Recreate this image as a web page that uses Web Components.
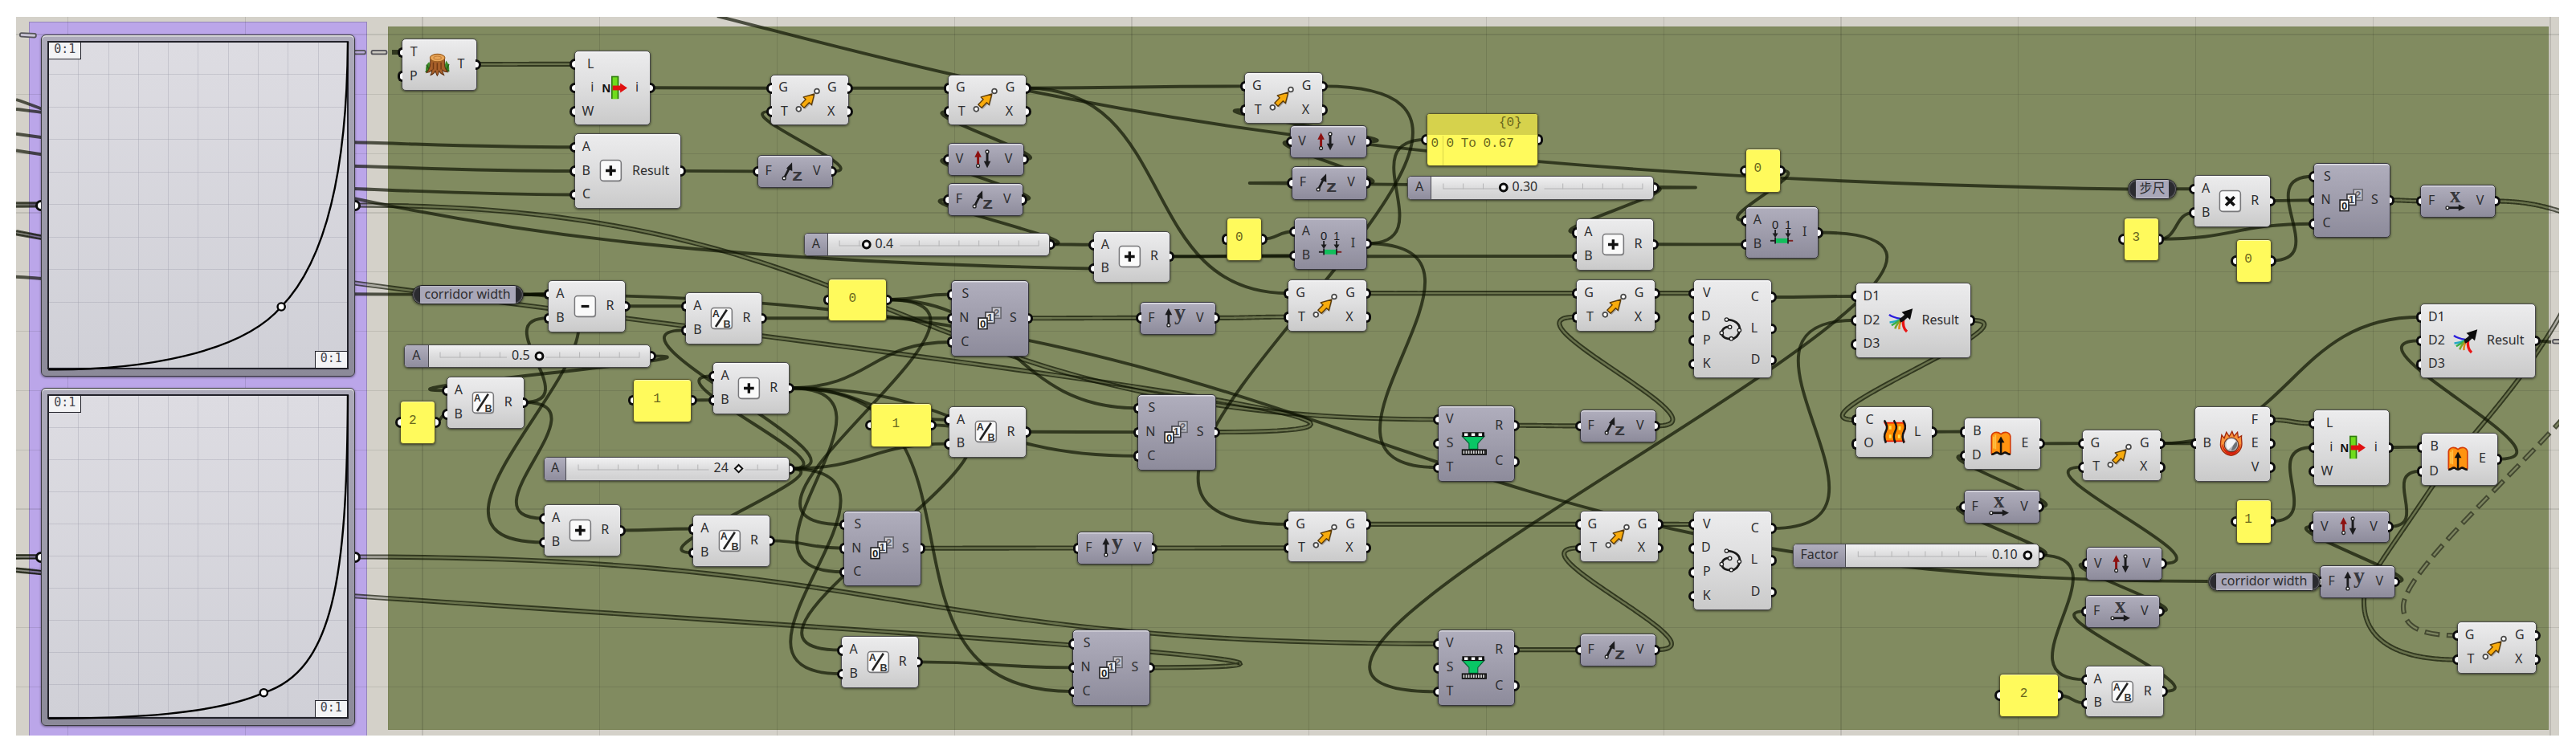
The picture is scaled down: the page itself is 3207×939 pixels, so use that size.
<!DOCTYPE html>
<html lang="en">
<head>
<meta charset="utf-8">
<title>Definition canvas</title>
<style>
html,body{margin:0;padding:0;background:#fff}
body{width:3207px;height:939px;overflow:hidden;font-family:"Noto Sans","Noto Sans CJK SC",sans-serif;font-size:16px;color:#2e2e30}
</style>
</head>
<body>
<flow-app></flow-app>
<script>
const ui = '"Noto Sans","Noto Sans CJK SC",sans-serif';

/* ---------- icons, 24 x 24 ---------- */
const btn = '<rect x="3.6" y="3.8" width="17.6" height="17.6" rx="2.6" fill="#000" opacity=".25"/><rect x="3" y="3" width="17.6" height="17.6" rx="2.4" fill="#fafafa" stroke="#77777a" stroke-width="1"/>';
const dot = (x, y, r = 1.3, w = .9, c = '#222') => `<circle cx="${x}" cy="${y}" r="${r}" fill="#fff" stroke="${c}" stroke-width="${w}"/>`;
const card = (x, y, n, f, c) => `<rect x="${x}" y="${y}" width="7.4" height="9.2" fill="${f}" stroke="${c}" stroke-width="1.1"/><text x="${x + 3.7}" y="${y + 7.9}" font-size="9" font-weight="700" text-anchor="middle" font-family="Liberation Sans" fill="${c}">${n}</text>`;
const ICONS = {
  plus: btn + '<path d="M11.8 7.6v8.6M7.5 11.9h8.6" stroke="#111" stroke-width="2.3"/>',
  minus: btn + '<path d="M8.6 11.9h6.6" stroke="#111" stroke-width="2.2"/>',
  times: btn + '<path d="M8.2 8.3l7.2 7.2M15.4 8.3l-7.2 7.2" stroke="#111" stroke-width="2.5"/>',
  div: btn + '<text x="3.9" y="10.7" font-size="8.6" font-weight="700" font-family="Liberation Sans" fill="#333">A</text><text x="13.3" y="19.6" font-size="8.6" font-weight="700" font-family="Liberation Sans" fill="#333">B</text><path d="M6.8 19L16.2 4.6" stroke="#222" stroke-width="1.8"/>',
  move: '<path d="M6 16.2l4-4.6-1.9-1.8 9.4-2.6-2.3 9.3-1.8-1.9-4.2 4.3z" fill="#000" opacity=".25" transform="translate(.6 .8)"/><path d="M6 15.8l4.3-4.4-2-1.9 9.3-2.7-2.4 9.2-2-1.9-4.3 4.4z" fill="#f8ab0c" stroke="#5b3a08" stroke-width=".9" stroke-linejoin="round"/>' + dot(4.3, 19.6, 2, 1.2, '#4a4a4a') + dot(19.7, 4.4, 2, 1.2, '#4a4a4a'),
  vv: '<path d="M7.2 18V8" stroke="#8d1010" stroke-width="2"/><path d="M7.2 4.2L4.3 10h5.8z" fill="#8d1010"/><path d="M15 6v10" stroke="#1b1b1d" stroke-width="2"/><path d="M15 19.2l-2.9-5.8h5.8z" fill="#1b1b1d"/>' + dot(7.2, 17.4) + dot(15, 5.4),
  z: '<path d="M5 17.4L9.6 8.4" stroke="#1b1b1d" stroke-width="1.9"/><path d="M11.6 4.3L6.8 9.4l5 2.2z" fill="#1b1b1d"/>' + dot(4.9, 17.6) + '<text x="11.6" y="20" font-size="14.2" font-weight="700" font-family="Liberation Sans" fill="#37373c" textLength="9" lengthAdjust="spacingAndGlyphs">z</text>',
  y: '<path d="M6 17V7" stroke="#1b1b1d" stroke-width="1.9"/><path d="M6 3.2L3 9h6z" fill="#1b1b1d"/>' + dot(6, 17.6) + '<text x="10.8" y="13.2" font-size="19" font-weight="700" font-family="Liberation Serif" fill="#37373c">y</text>',
  x: '<text x="12" y="12.6" font-size="18" font-weight="700" text-anchor="middle" font-family="Liberation Serif" fill="#37373c">x</text><path d="M6 17.5h10" stroke="#1b1b1d" stroke-width="1.9"/><path d="M20.4 17.5L14.8 14.7v5.6z" fill="#1b1b1d"/>' + dot(5.4, 17.5),
  series: card(14.4, 2.6, 2, '#c9c9d0', '#66666e') + card(8.8, 6.7, 1, '#ececf0', '#3c3c42') + card(2.8, 11.6, 0, '#fff', '#1f1f22'),
  remap: '<path d="M1.6 5.6h18.8l-5.6 6.2v4.8H7.4v-4.8z" fill="#09c665" stroke="#066838" stroke-width=".8"/><rect x="1.6" y="2.2" width="18.8" height="4" fill="#111"/><path d="M3.4 4.2h3M9.4 4.2h3M15.4 4.2h3" stroke="#fff" stroke-width="2.4"/><rect x="1.2" y="16.6" width="21.2" height="5" fill="#111"/><path d="M2.4 19.1h19" stroke="#d8d8d8" stroke-width="2.6" stroke-dasharray="1.2 .9"/>',
  domain: '<path d="M2 18.9h4" stroke="#222" stroke-width="1.3"/><path d="M17 18.9h4.2" stroke="#7c2020" stroke-width="1.3"/><rect x="6.2" y="16.9" width="10.8" height="4" fill="#12be5c"/><path d="M6.2 16v5.4M17 16v5.4M6.2 9.6v4M17 9.6v4" stroke="#1b1b1d" stroke-width="1.2"/><path d="M6.2 16.4l-2.4-3.8h4.8zM17 16.4l-2.4-3.8h4.8z" fill="#1b1b1d"/><text x="6.2" y="9" font-size="10" text-anchor="middle" font-family="Liberation Sans" fill="#1b1b1d">0</text><text x="17" y="9" font-size="10" text-anchor="middle" font-family="Liberation Sans" fill="#1b1b1d">1</text>',
  poly: '<path d="M8.5 4.1C15 4 20.4 7.600 19.600 13.1 19 17.400 16 20.200 12.500 20.400 9 20.600 5 19.500 4.300 15.400 5 11.500 8 9.800 11.300 10.200" fill="none" stroke="#1a1a1a" stroke-width="1.9"/>' + dot(8.5, 4.1, 1.5) + dot(19.3, 13.1, 1.5) + dot(12.5, 20.2, 1.5) + dot(4.3, 15.4, 1.5) + dot(11.3, 10.4, 1.5),
  loft: '<path d="M4.300 4.500c2.800 4.500 2.400 5 .8 8s-1 4 0 7.500l15.700 0c-1.600-3.500-1.800-4.500-.2-7.500s2-4 -.6-8z" fill="#ff8a00" stroke="#f01c00" stroke-width="1.200"/><path d="M8 8.500h2M16 9h2M8 16h2M15.500 16h2" stroke="#ffe04a" stroke-width="3"/><path d="M4 2.300C6.500 6 7 8.500 5.300 11.500 3.700 14.500 3.600 17.500 5.400 21.500M12 2.300c2.500 3.700 3 6.200 1.300 9.200-1.600 3-1.700 6 .1 10M19.800 2.300c2.500 3.700 2.600 6.200.9 9.200-1.600 3-1.700 6 .1 10" fill="none" stroke="#161616" stroke-width="1.700"/>',
  extrude: '<path d="M3.600 20.200V5.600C4.400 2 8.400 1.200 11.600 3.800 14.800 1.200 18.800 2 19.600 5.600v14.600c-2.200 1.400-3.400-2-5.400-1-1.600 1.600-3.400 1.600-5.200 0-2-1-3.200 2.400-5.400 1z" fill="#ff9411" stroke="#d53c06" stroke-width="1.100"/><path d="M7 4.500v12M5.500 6v10" stroke="#ffc044" stroke-width="1.200"/><path d="M3.600 20.900c2.200.6 3.400-2.400 5.400-1.200 1.600 1.600 3.600 1.600 5.200 0 2-1.200 3.200 1.800 5.400 1.200M11.600 20V9" fill="none" stroke="#16120c" stroke-width="1.700"/><path d="M11.600 5.800l-3 5.200h6z" fill="#16120c"/>',
  brep: '<path d="M3 13C3 9 3.800 7 4 4.600l2.200 2.600L8 2.200l2.400 3.600L12.800 1.600l1.600 4 3-3.400.6 4.600 2.800-1.600C20.400 8 21.300 10 21 13c-.5 5-5 8.700-9 9-4.200-.4-8.800-4-9-9z" fill="#f9923a" stroke="#a1280d" stroke-width=".9"/><path d="M4.200 12c0 5 3.600 9.200 8 9.400 4.200-.4 7.800-4.600 7.800-9.400-2 3-1 6-7.800 7-6-.6-6-4-8-7z" fill="#d8200c"/><circle cx="12.200" cy="12.800" r="6" fill="#b9bcc0" stroke="#6a3024" stroke-width=".8"/><path d="M8.500 9.500c2.500-2.500 6-2 7.500.5-2 3-4 5-6.500 7-2-2-2-5-1-7.500z" fill="#f4f5f7"/><path d="M16.500 10c1.500 3 0 7-4.500 8 1-3 2-6 4.500-8z" fill="#6d7176"/>',
  tree: '<path d="M2.200 17.5C1.600 14 3 11 5 9.500l2 7zM21.800 17c.6-3.400-.8-6.500-2.600-8.500l-2 8z" fill="#3f8d2a"/><path d="M2.800 12l2.600 5M1.800 18.200l4-2.600M21.600 11.500l-2.200 5.200M22 17.500l-4-2" stroke="#26641c" stroke-width="1.200"/><path d="M6 6.500c0 5 .4 8-3.200 12.200 2.200-.4 3.600-1.200 4.600-2.200-.2 1.600-.2 2.600-1.200 4.200 2-.6 3.200-1.800 4-3.400.6 1.600.8 2.600 1.600 4 .8-1.200 1.200-2.400 1.400-4 1 1.600 2.200 2.600 4.200 3.400-1-1.600-1.200-2.600-1.200-4.200 1 1 2.400 1.600 4.400 1.600C17.200 14 18 11.500 18 6.500z" fill="#a8602a" stroke="#5f3110" stroke-width=".7"/><path d="M8.500 10v6M11.800 10.500v6M15 10v6" stroke="#733b14" stroke-width="1"/><ellipse cx="12" cy="6.200" rx="6.300" ry="3.200" fill="#e9a659" stroke="#9c5f22" stroke-width=".8"/><ellipse cx="12" cy="6.200" rx="3.200" ry="1.500" fill="none" stroke="#c17d38" stroke-width=".7"/>',
  item: '<rect x="8.900" y="1.900" width="6.200" height="19.400" fill="#6fdc1c"/><path d="M9.400 21V2.400h5.200V21" fill="none" stroke="#2f7a10" stroke-width="1.100"/><path d="M10 11.900h7.500" stroke="#e01010" stroke-width="4"/><path d="M22.400 11.900L16.400 7.800v8.200z" fill="#e01010"/><text x="1.100" y="15.800" font-size="10" font-weight="700" font-family="Liberation Sans" fill="#111">N</text>',
  merge: '<g fill="none" stroke-width="1.700"><path d="M2 7.400C5 9.800 8 10.200 12.500 11" stroke="#2a1cdc"/><path d="M2.400 14C6 13.600 8 13 12.500 11" stroke="#26a9c4"/><path d="M4 16.500C6.500 15 9 13.500 13 11" stroke="#36b04a"/><path d="M7 19.300C8 16 10 13.500 13 11" stroke="#7aa62a"/><path d="M10.500 19.800C10.300 16 11.500 13.500 13 11" stroke="#e0861c"/><path d="M17 21.800C14.800 20 13.400 16 14 11" stroke="#e81414" stroke-width="2.300"/></g><path d="M11 12.400C14 11.500 16 9 18 6.600" fill="none" stroke="#111" stroke-width="3.400"/><path d="M21.900 2.200L12.600 5.300l7.100 6.400z" fill="#0b0b0b"/>'
};
class FlowIcon extends HTMLElement {
  connectedCallback() {
    this.attachShadow({mode: 'open'}).innerHTML =
      `<style>:host{display:block;width:35.300px;height:35.300px}svg{display:block;width:100%;height:100%;overflow:visible}</style><svg viewBox="0 0 24 24">${ICONS[this.getAttribute('name')]}</svg>`;
  }
}
customElements.define('flow-icon', FlowIcon);

const boxCss = `:host{position:absolute;display:block;left:var(--x);top:var(--y);width:var(--w);height:var(--h);font:16px/20px ${ui};color:#2e2e30}
.grip{position:absolute;top:calc(50% - 6.800px);width:6.800px;height:13.600px;box-sizing:border-box;background:#fff;border:3px solid #0c0c0c}
.grip.l{left:-6.500px;border-right:0;border-radius:7px 0 0 7px}
.grip.r{right:-6.500px;border-left:0;border-radius:0 7px 7px 0}`;

/* ---------- component node ---------- */
class FlowNode extends HTMLElement {
  connectedCallback() {
    const rows = (a, side) => (this.getAttribute(a) || '').split(',').map(t => `<div class="row"><i class="grip ${side}"></i><span>${t}</span></div>`).join('');
    this.attachShadow({mode: 'open'}).innerHTML = `<style>${boxCss}
.body{display:flex;height:100%;box-sizing:border-box;padding:1.700px 0;border:1px solid #49494b;border-radius:5px;background:linear-gradient(#ececed,#dfdfe0 45%,#cacaca);box-shadow:inset 0 1.500px 0 #fff9,0 1px 3px #0009}
:host([tone=grey]) .body{background:linear-gradient(#b0aebd,#a19fae 45%,#8d8b9b);border-color:#36363c}
.col{display:flex;flex-direction:column}
.row{position:relative;flex:1;display:flex;align-items:center;padding-bottom:0}
.row span{position:relative;top:-1.500px}
.in .row{justify-content:flex-end;padding-left:9px}
.out .row{padding-right:14px}
.mid{flex:1;display:flex;align-items:center;justify-content:center;min-width:0}
.mid flow-icon{flex:none}
</style><div class="body"><div class="col in">${rows('in', 'l')}</div><div class="mid"><flow-icon name="${this.getAttribute('icon')}"></flow-icon></div><div class="col out">${rows('out', 'r')}</div></div>`;
  }
}
customElements.define('flow-node', FlowNode);

/* ---------- yellow panel ---------- */
class FlowPanel extends HTMLElement {
  connectedCallback() {
    const head = this.getAttribute('head');
    this.attachShadow({mode: 'open'}).innerHTML = `<style>${boxCss}
.body{height:100%;box-sizing:border-box;border:1px solid #57552b;border-radius:4px;background:#fffa5c;box-shadow:0 1px 3px #0009,inset 0 1px 0 #ffffb0;display:flex;align-items:center;justify-content:center;padding:0 13px 4px 0;overflow:hidden;font:16px/18px "Liberation Mono",monospace;color:#6a671c}
.list{display:block;padding:0}
.head{height:26px;line-height:22px;background:#d6d24c;text-align:right;padding-right:19px;box-sizing:border-box}
.line{display:flex;line-height:20px;margin-top:1px}
.line b{font-weight:400;width:20px;box-sizing:border-box;padding-left:5px;border-right:1px solid #d9d54a;height:40px}
.line span{padding-left:4px;white-space:pre;word-spacing:-1px}
</style><i class="grip l"></i><i class="grip r"></i>` + (head
      ? `<div class="body list"><div class="head">${head}</div><div class="line"><b>0</b><span><slot></slot></span></div></div>`
      : `<div class="body"><slot></slot></div>`);
  }
}
customElements.define('flow-panel', FlowPanel);

/* ---------- relay ---------- */
class FlowRelay extends HTMLElement {
  connectedCallback() {
    this.attachShadow({mode: 'open'}).innerHTML = `<style>${boxCss}
.body{height:100%;box-sizing:border-box;border:1.500px solid #1f1f22;border-radius:12px;background:linear-gradient(90deg,#2b2b30 0 9px,#a9a7b8 9px calc(100% - 9px),#2b2b30 calc(100% - 9px));display:flex;align-items:center;justify-content:center;box-shadow:0 1px 3px #0009,inset 0 0 2px #eee;white-space:nowrap;padding-bottom:2px}
</style><div class="body"><slot></slot></div>`;
  }
}
customElements.define('flow-relay', FlowRelay);

/* ---------- number slider ---------- */
class FlowSlider extends HTMLElement {
  connectedCallback() {
    const g = n => +this.getAttribute(n), lw = g('labelw'), k = g('knob'), tx = g('tx'), step = g('step') || 24.8, start = lw + 13.5, h = 29;
    let r = '';
    const lo = Math.min(tx, k) - 6, hi = Math.max(tx + g('tw'), k) + 8;
    for (let i = 0; i <= 10; i++) { const X = start + i * step; if (X < lo || X > hi) r += `M${X} 9.500v7`; }
    const end = start + 10 * step;
    r += `M${start} 16H${Math.min(lo, end)}` + (hi < end ? `M${hi} 16H${end}` : '');
    const knob = this.hasAttribute('diamond') ? `<path d="M${k} 10l4.600 4.600-4.600 4.600-4.600-4.600z" fill="#fff" stroke="#0c0c0c" stroke-width="2"/>` : `<circle cx="${k}" cy="14.500" r="4.400" fill="#fff" stroke="#0c0c0c" stroke-width="3"/>`;
    this.attachShadow({mode: 'open'}).innerHTML = `<style>${boxCss}
.body{position:relative;display:flex;height:100%;box-sizing:border-box;border:1px solid #49494b;border-radius:5px;overflow:hidden;background:linear-gradient(#f1f1f2,#dcdcdd 50%,#cfcfd0);}
:host{border-radius:5px;box-shadow:0 1px 3px #0009}
.name{width:${lw - 2}px;box-sizing:border-box;background:linear-gradient(#b0aebd,#8f8d9d);border-right:1.500px solid #4a4a50;display:flex;align-items:center;justify-content:center;padding-bottom:3px}
svg{position:absolute;left:-1px;top:-1px;width:100%;height:100%;overflow:visible}
text{font:16px ${ui};fill:#2e2e30}
</style><i class="grip r"></i><div class="body"><div class="name"><slot></slot></div><svg><path d="${r}" fill="none" stroke="#b4b4b6" stroke-width="1"/>${knob}<text x="${tx}" y="19">${this.getAttribute('value')}</text></svg></div>`;
  }
}
customElements.define('flow-slider', FlowSlider);

/* ---------- graph mapper ---------- */
class FlowMapper extends HTMLElement {
  connectedCallback() {
    this.attachShadow({mode: 'open'}).innerHTML = `<style>${boxCss}
.body{display:flex;height:100%;box-sizing:border-box;padding:7px 7.500px 8px;border:1px solid #3a3a40;border-radius:6px;background:linear-gradient(#adabba,#8c8a99);box-shadow:inset 0 1.500px 0 #eee,0 1px 3px #0007}
.plot{position:relative;flex:1;display:flex;flex-direction:column;justify-content:space-between;border:2px solid #22222a;box-sizing:border-box;background:
repeating-linear-gradient(90deg,transparent 0 36.300px,#9a9aa85a 36.300px 37.300px),
repeating-linear-gradient(transparent 0 calc(10% - 1px),#9a9aa85a calc(10% - 1px) 10%),linear-gradient(#dddce2,#d0d0d7);font:15px/17px "DejaVu Sans Mono",monospace;color:#46464c}
.tag{width:40px;height:21px;box-sizing:border-box;background:#f3f3f5;border:solid #22222a;border-width:0 1.500px 1.500px 0;text-align:center;font-weight:400}
.tag.b{align-self:flex-end;border-width:1.500px 0 0 1.500px}
svg{position:absolute;left:0;top:0;width:100%;height:100%;overflow:visible}
</style><i class="grip l"></i><i class="grip r"></i><div class="body"><div class="plot"><div class="tag">0:1</div><div class="tag b">0:1</div></div></div>
<svg><path d="${this.getAttribute('curve')}" fill="none" stroke="#000" stroke-width="2.400"/><circle cx="${this.getAttribute('hx')}" cy="${this.getAttribute('hy')}" r="4.600" fill="#fff" stroke="#000" stroke-width="2.400"/></svg>`;
  }
}
customElements.define('flow-mapper', FlowMapper);

/* ---------- document data ---------- */
const G = 'grey';
const kinds = {
  move: ['G,T', 'G,X', 'move'], ab: ['A,B', 'R', 'div'], add: ['A,B', 'R', 'plus'], series: ['S,N,C', 'S', 'series', G],
  fz: ['F', 'V', 'z', G], fy: ['F', 'V', 'y', G], fx: ['F', 'V', 'x', G], vv: ['V', 'V', 'vv', G],
  item: ['L,i,W', 'i', 'item'], remap: ['V,S,T', 'R,C', 'remap', G], domain: ['A,B', 'I', 'domain', G],
  poly: ['V,D,P,K', 'C,L,D', 'poly'], merge: ['D1,D2,D3', 'Result', 'merge'], extrude: ['B,D', 'E', 'extrude'],
  loft: ['C,O', 'L', 'loft'], sub: ['A,B', 'R', 'minus'], mult: ['A,B', 'R', 'times'], tree: ['T,P', 'T', 'tree'],
  brep: ['B', 'F,E,V', 'brep'], sum: ['A,B,C', 'Result', 'plus']
};
const nodes = {
  tree: ['tree', 500, 48, 93.5, 64.7], item1: ['item', 714.6, 62.7, 95.5, 93.8], sum: ['sum', 714.6, 166.3, 133.8, 93.7],
  mv1: ['move', 959.3, 92.7, 97.4, 63.8], fz1: ['fz', 942.5, 193.3, 94, 40.8], sub: ['sub', 682.2, 349, 97.3, 65],
  ab1: ['ab', 853.2, 364, 96.3, 65], add2: ['add', 887.3, 451, 96, 65], ab2: ['ab', 555.6, 469, 97, 64.7],
  add3: ['add', 676.8, 628.3, 96.3, 65], ab3: ['ab', 862, 641.3, 97, 64.8],
  mv2: ['move', 1180.1, 92.7, 98.3, 63.8], vv1: ['vv', 1179.8, 178.3, 95.6, 40.8], fz2: ['fz', 1179.8, 228.3, 93.9, 41],
  add4: ['add', 1360.6, 287.7, 96.3, 64], ser1: ['series', 1184.2, 349.3, 96.7, 94.5], fy1: ['fy', 1419.3, 375.7, 94.3, 41],
  ab4: ['ab', 1180.8, 505.7, 97.6, 64.7], ser2: ['series', 1416.2, 491, 97.4, 94.8], ser3: ['series', 1050.2, 636, 96.7, 94],
  fy2: ['fy', 1341.2, 662.3, 94.6, 41], ab5: ['ab', 1047.4, 792.3, 96.4, 64.7], ser4: ['series', 1335.4, 784.3, 97, 94.7],
  mv3: ['move', 1549, 90.3, 98.3, 64.2], vv2: ['vv', 1606.3, 155.7, 96, 41.6], fz3: ['fz', 1607.7, 207.3, 94.2, 41.4],
  dom1: ['domain', 1610.7, 271, 91.5, 65], mv4: ['move', 1603.2, 348, 98.7, 64.5], add5: ['add', 1962.2, 272.3, 97.2, 64.5],
  mv5: ['move', 1962.2, 348, 99.3, 64.5], rem1: ['remap', 1789.9, 505, 96.6, 95], fz4: ['fz', 1966.6, 510, 95, 41.4],
  mv6: ['move', 1603.2, 635.7, 98.7, 64.4], mv7: ['move', 1966.6, 635.7, 98.7, 64.4], rem2: ['remap', 1789.9, 784.3, 96.6, 95],
  fz5: ['fz', 1966.6, 788.7, 95, 41.4], dom2: ['domain', 2172.7, 257.3, 91.8, 65], pl1: ['poly', 2107.9, 348, 98.6, 123],
  mg1: ['merge', 2309.5, 351.7, 144.4, 94.7], pl2: ['poly', 2107.9, 635.7, 98.6, 124.3], loft: ['loft', 2310.2, 505.7, 96.3, 64.7],
  ex1: ['extrude', 2445, 520.3, 95.5, 64.7], fx1: ['fx', 2444.6, 610.3, 95.2, 41.7], mv8: ['move', 2592.4, 535, 98.2, 64.4],
  vv3: ['vv', 2597.1, 681.3, 95, 41.8], fx2: ['fx', 2596.1, 740.7, 93.4, 41.4], ab6: ['ab', 2596.4, 829.3, 97.4, 64],
  mul: ['mult', 2730.9, 218, 96.4, 64.7], ser5: ['series', 2879.5, 202.7, 96.4, 93.7], fx3: ['fx', 3013.1, 229.7, 94.2, 41.6],
  mg2: ['merge', 3013.1, 377.7, 144.4, 93.7], brep: ['brep', 2732.4, 505.7, 95, 94], item2: ['item', 2879.5, 510, 95.4, 94.7],
  ex2: ['extrude', 3014.2, 539.3, 95.8, 65.4], vv4: ['vv', 2879.1, 635.7, 95.7, 40.8], fy3: ['fy', 2888.4, 704, 93.8, 41.4],
  mv9: ['move', 3058.8, 773.7, 98.8, 65.6]
};
const panels = {
  p2: [498.3, 498.7, 44, 54.3, '2'], p1: [788, 471.7, 73.3, 54, '1'], p0: [1031, 346.7, 73.4, 53.7, '0'], p1b: [1083.6, 502.3, 76.2, 54.7, '1'],
  p0b: [1527.1, 270.7, 44.2, 54.6, '0'], pbig: [1775.5, 141.3, 139.3, 65.7, '0 To 0.67', '{0}'], p0c: [2172.7, 185.3, 44, 54.4, '0'],
  p2b: [2489.3, 839.3, 73.4, 54, '2'], p3: [2643.7, 271, 44.2, 54, '3'], p0d: [2783.5, 297.7, 44.1, 54.3, '0'], p1c: [2783.5, 622.3, 44.1, 54.4, '1']
};
const sliders = {
  s05: [503, 429.3, 307.2, 28.7, 'A', 31.5, 168.5, 134, '0.5', 23], s24: [676.8, 569.3, 306.7, 29.4, 'A', 29.5, 242.6, 211.5, '24', 19, 'd'],
  s04: [1001, 290.3, 306.4, 28.7, 'A', 30.6, 77.8, 88.5, '0.4', 23], s30: [1752, 219.3, 307, 29.4, 'A', 31.4, 119.8, 130.5, '0.30', 32],
  sF: [2231.7, 676.7, 307.8, 30, 'Factor', 67.8, 292.4, 248, '0.10', 32, '', 20.9]
};
const relays = {r1: [512.6, 355.3, 139, 23.5, 'corridor width'], r2: [2748.7, 712.7, 140, 23.3, 'corridor width'], r3: [2648.8, 223.3, 61.2, 24.4, '步尺']};

/* from.port > to.port, "2" marks a list wire, last value overrides the handle length */
const links = [
  ['tree', 'item1.0', 2], ['item1', 'mv1.0'], ['fz1', 'mv1.1'], ['sum', 'fz1.0'], ['mv1', 'mv2.0'], ['vv1', 'mv2.1'], ['fz2', 'vv1.0'],
  ['s04', 'fz2.0'], ['s04', 'add4.0'], ['r1', 'sub.0'], ['r1', 'sub.0'], ['sub', 'ab1.0'], ['s05', 'ab2.0'], ['p2', 'ab2.1'], ['ab2', 'sub.1'], ['ab2', 'add3.0'],
  ['r1', 'add3.1'], ['r1', 'r2.0'], ['s24', 'ab1.1'], ['s24', 'add2.0'], ['p1', 'add2.1'], ['s24', 'ab3.1'], ['s24', 'ab4.1'], ['s24', 'ab5.1'],
  ['add3', 'ab3.0'], ['ab3', 'ser3.1'], ['add2', 'ser1.2'], ['add2', 'ab4.0'], ['add2', 'ser3.2'], ['add2', 'ser4.2'], ['add2', 'ser2.2'],
  ['p0', 'ser1.0'], ['p0', 'ser2.0'], ['p0', 'ser3.0'], ['ab1', 'ser1.1'], ['p1b', 'ab5.0'], ['ab4', 'ser2.1'], ['ab5', 'ser4.1'],
  ['ser1', 'fy1.0', 2], ['fy1', 'mv4.1', 2], ['ser3', 'fy2.0', 2], ['fy2', 'mv6.1', 2], ['mv4', 'mv5.0', 2], ['mv6', 'mv7.0', 2], ['mv5', 'pl1.0', 2], ['mv7', 'pl2.0', 2],
  ['rem1', 'fz4.0', 2], ['fz4', 'mv5.1', 2], ['rem2', 'fz5.0', 2], ['fz5', 'mv7.1', 2],
  ['mv2', 'mv3.0'], ['mv2', 'mv4.0'], ['mv3', 'mv6.0'], ['vv2', 'mv3.1'], ['fz3', 'vv2.0'], ['s30', 'fz3.0', 1, 290], ['s30', 'add5.0'],
  ['p0b', 'dom1.0'], ['add4', 'dom1.1'], ['add4', 'add5.1'], ['dom1', 'pbig.0'], ['dom1', 'rem1.2'], ['add5', 'dom2.1'], ['p0c', 'dom2.0'], ['dom2', 'rem2.2'],
  ['pl1', 'mg1.0'], ['pl2', 'mg1.1'], ['mg1', 'loft.0', 2], ['loft', 'ex1.0'], ['ex1', 'mv8.0'], ['fx1', 'ex1.1'], ['sF', 'fx1.0'], ['sF', 'ab6.0'], ['p2b', 'ab6.1'],
  ['ab6', 'fx2.0'], ['fx2', 'vv3.0'], ['vv3', 'mv8.1'], ['mv8', 'brep.0'], ['mv8', 'mg2.0'], ['brep', 'item2.0', 2], ['p1c', 'item2.1'], ['item2', 'ex2.0'], ['vv4', 'ex2.1'],
  ['fy3', 'vv4.0'], ['ex2', 'mg2.1'], ['r3', 'mul.0'], ['p3', 'mul.1'], ['p3', 'ser5.2'], ['p0d', 'ser5.0'], ['mul', 'ser5.1'], ['ser5', 'fx3.0', 2],
  ['gm1', 'rem1.0', 2], ['gm2', 'rem2.0', 2], ['ser2', 'gm1.0', 2], ['ser4', 'gm2.0', 2]
];
const mappers = {gm1: [50.8, 42.7, 391.4, 426.3], gm2: [50.8, 483.3, 391.4, 421]};

function port(id, side, i) {
  let x, y, w, h, n = 1;
  if (nodes[id]) { let k; [k, x, y, w, h] = nodes[id]; n = kinds[k][side].split(',').length; }
  else [x, y, w, h] = panels[id] || sliders[id] || relays[id] || mappers[id];
  return [side ? x + w : x, y + 2.7 + (h - 5.4) * (i + .5) / n - .3];
}
function offset(c, o) {
  let d = '';
  const n = 90;
  for (let k = 0; k <= n; k++) {
    const t = k / n, u = 1 - t, p = [0, 1].map(a => u * u * u * c[0][a] + 3 * u * u * t * c[1][a] + 3 * u * t * t * c[2][a] + t * t * t * c[3][a]);
    const v = [0, 1].map(a => u * u * (c[1][a] - c[0][a]) + 2 * u * t * (c[2][a] - c[1][a]) + t * t * (c[3][a] - c[2][a]));
    const l = Math.hypot(...v) || 1;
    d += (k ? 'L' : 'M') + (p[0] - v[1] / l * o).toFixed(2) + ' ' + (p[1] + v[0] / l * o).toFixed(2);
  }
  return d;
}
const wire = (c, dbl) => dbl
  ? `<path d="${offset(c, 2.1)}" stroke-width="1.900"/><path d="${offset(c, -2.1)}" stroke-width="1.900"/><path d="${offset(c, 0)}" stroke-width="2.200" stroke-opacity=".2"/>`
  : `<path d="M${c[0]}C${c[1]} ${c[2]} ${c[3]}" stroke-width="3.900"/>`;

class FlowWires extends HTMLElement {
  connectedCallback() {
    let s = '';
    for (const [a, b, dbl, dd] of links) {
      const [bi, bp] = b.split('.'), p = port(a, 1, 0), q = port(bi, 0, +bp);
      const d = dd || Math.max(Math.abs(q[0] - p[0]) * .5, Math.abs(q[1] - p[1]) * .74);
      s += wire([p, [p[0] + d, p[1]], [q[0] - d, q[1]], q], dbl === 2);
    }
    const one = (...p) => { s += wire(p); }, two = (...p) => { s += wire(p, true); };
    one([440, 177.3], [530, 179.5], [600, 183.3], [715, 183.3]);
    one([440, 206.7], [530, 209.5], [600, 213], [715, 213]);
    one([440, 235], [530, 238.5], [600, 242], [715, 242.5]);
    one([440, 247], [620, 285], [860, 325], [1361, 334.5]);
    one([440, 366.3], [460, 366.5], [480, 366.6], [513, 366.6]);
    one([20, 124], [30, 127], [40, 131], [53, 136]);
    one([20, 136], [30, 137], [40, 138.5], [53, 140]);
    one([20, 166.7], [30, 168], [40, 169.5], [53, 171.2]);
    one([20, 187.5], [30, 189], [40, 190.5], [53, 192.5]);
    one([20, 344.7], [30, 345], [40, 346], [53, 347]);
    two([20, 289], [30, 291], [40, 293], [53, 295.5]);
    two([20, 254.3], [30, 254.3], [40, 254.3], [50, 254.3]);
    two([20, 709.5], [30, 710.5], [40, 711.5], [53, 713]);
    two([20, 693.3], [30, 693.3], [40, 693.3], [50, 693.3]);
    one([893, 20], [1200, 98], [1600, 220], [2649, 235.5]);
    two([3107, 250.5], [3135, 250.5], [3160, 254], [3190, 264]);
    two([3059, 821.5], [2990, 822], [2942, 800], [2943, 748]);
    two([2943, 748], [2943, 725], [2965, 700], [3028, 606]);
    two([3028, 606], [3060, 562], [3100, 520], [3137, 470]);
    two([3137, 470], [3155, 445], [3175, 415], [3190, 388]);
    one([3157, 424.500], [3162, 424.500], [3168, 425], [3176, 426]);
    const dash = (d, inner, off) => `<path d="${d}" stroke="#3c402b" stroke-opacity=".9" stroke-width="6.200" stroke-dasharray="19 8.500" stroke-dashoffset="${off}"/><path d="${d}" stroke="${inner}" stroke-opacity="1" stroke-width="2.400" stroke-dasharray="15.400 12.100" stroke-dashoffset="${off - 1.8}"/>`;
    const cap = (x, y, w, f, r = 2) => `<rect x="${x}" y="${y}" width="${w}" height="4.600" rx="2" fill="${f}" stroke="#55545a" stroke-opacity="1" stroke-width="1.800" transform="rotate(${r} ${x} ${y})"/>`;
    const far = dash('M3059 791.500C3015 791 2992 782 2992 755C2992 715 3120 600 3190 522', '#7c8460', 6);
    const caps = cap(25, 41, 20, '#c9c4d4', 3) + cap(441, 62.800, 14, '#b7a8d8', 0) + cap(462.500, 62.800, 19, '#c9c6be', 0) + `<path d="M488 65h14" stroke-width="6"/>` + cap(3178, 423, 14, '#c9c6be', 0);
    this.attachShadow({mode: 'open'}).innerHTML = `<style>:host{position:absolute;left:0;top:0;display:block;width:3166px;height:895px;overflow:hidden}svg{display:block}</style>
<svg width="3166" height="895" viewBox="20 21 3166 895" fill="none" stroke="#0c1000" stroke-opacity=".68">${s}${far}${caps}</svg>`;
  }
}
customElements.define('flow-wires', FlowWires);

/* ---------- group box ---------- */
class FlowGroup extends HTMLElement {
  connectedCallback() {
    this.attachShadow({mode: 'open'}).innerHTML = `<style>:host{position:absolute;display:block;box-sizing:border-box;left:var(--x);top:var(--y);width:var(--w);height:var(--h);background:var(--fill);border:1px solid var(--edge)}</style>`;
  }
}
customElements.define('flow-group', FlowGroup);

/* ---------- canvas: groups, grid, wires, then objects; objects share one coordinate plane ---------- */
class FlowCanvas extends HTMLElement {
  connectedCallback() {
    this.attachShadow({mode: 'open'}).innerHTML = `<style>
:host{position:relative;display:block;width:3166px;height:895px;overflow:hidden;background:#d4d1c9}
.grid{position:absolute;inset:0;background:
repeating-linear-gradient(90deg,#0000001c 0 1.200px,transparent 1.200px 220.750px) 64px 0/3200px 100%,
repeating-linear-gradient(#00000019 0 1.200px,transparent 1.200px 73.800px) 0 22px/100% 960px}
.plane{position:absolute;left:-20px;top:-21px;width:0;height:0}
</style><slot name="group"></slot><div class="grid"></div><slot name="wires"></slot><div class="plane"><slot></slot></div>`;
  }
}
customElements.define('flow-canvas', FlowCanvas);

class FlowApp extends HTMLElement {
  connectedCallback() {
    const pos = (x, y, w, h) => `style="--x:${x}px;--y:${y}px;--w:${w}px;--h:${h}px"`;
    let h = '';
    h += `<flow-mapper ${pos(...mappers.gm1)} hx="299.200" hy="339" curve="M9.200 417.300C124.200 418.300 249.200 397.300 299.200 339C354.200 282.300 381 168 382 9"></flow-mapper>`;
    h += `<flow-mapper ${pos(...mappers.gm2)} hx="277.400" hy="379.700" curve="M9.200 411.700C109.200 411.700 217.200 406.700 277.400 379.700C364.200 351.700 381 236.700 382 9"></flow-mapper>`;
    for (const [k, x, y, w, hh] of Object.values(nodes)) {
      const [i, o, ic, tone] = kinds[k];
      h += `<flow-node ${pos(x, y, w, hh)} in="${i}" out="${o}" icon="${ic}"${tone ? ` tone="${tone}"` : ''}></flow-node>`;
    }
    for (const [x, y, w, hh, t, head] of Object.values(panels)) h += `<flow-panel ${pos(x, y, w, hh)}${head ? ` head="${head}"` : ''}>${t}</flow-panel>`;
    for (const [x, y, w, hh, l, lw, k, tx, v, tw, dm, st] of Object.values(sliders)) h += `<flow-slider ${pos(x, y, w, hh)} labelw="${lw}" knob="${k}" tx="${tx}" tw="${tw}" value="${v}"${dm ? ' diamond' : ''}${st ? ` step="${st}"` : ''}>${l}</flow-slider>`;
    for (const [x, y, w, hh, t] of Object.values(relays)) h += `<flow-relay ${pos(x, y, w, hh)}>${t}</flow-relay>`;
    this.attachShadow({mode: 'open'}).innerHTML = `<style>:host{display:flex;box-sizing:border-box;width:3207px;height:939px;padding:21px 21px 23px 20px;background:#fff}</style>
<flow-canvas>
<flow-group slot="group" style="--x:15.500px;--y:5.500px;--w:421px;--h:900px;--fill:#bba6e9;--edge:#9585bb"></flow-group>
<flow-group slot="group" style="--x:463px;--y:11.500px;--w:2689.500px;--h:876.500px;--fill:#818b60;--edge:#7b8459"></flow-group>
<flow-wires slot="wires"></flow-wires>${h}</flow-canvas>`;
  }
}
customElements.define('flow-app', FlowApp);
</script>
</body>
</html>
